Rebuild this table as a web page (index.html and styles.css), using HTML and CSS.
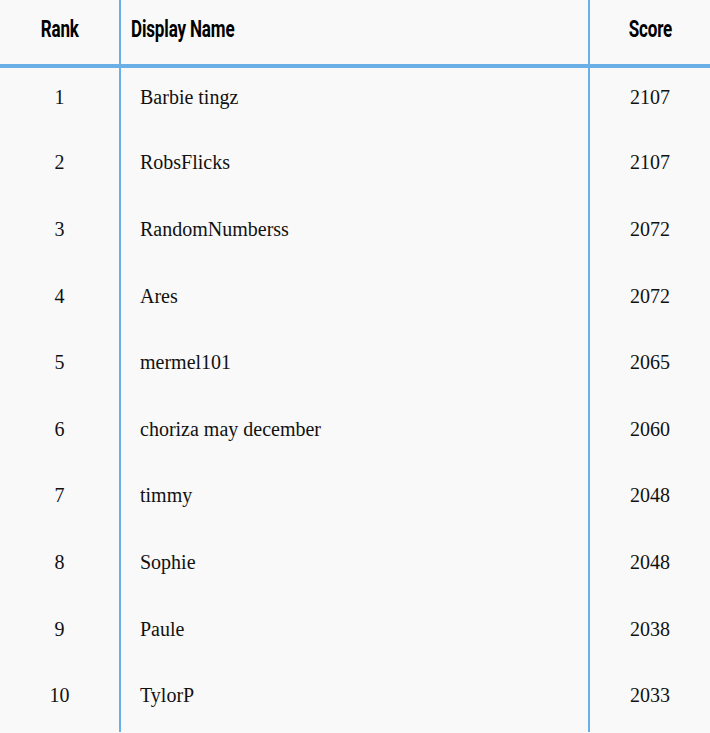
FILE: index.html
```html
<!DOCTYPE html>
<html>
<head>
<meta charset="utf-8">
<link rel="stylesheet" href="styles.css">
</head>
<body>
<table class="board">
  <thead>
    <tr>
      <th class="c-rank"><span class="hd">Rank</span></th>
      <th class="c-name"><span class="hd hd-left">Display Name</span></th>
      <th class="c-score"><span class="hd">Score</span></th>
    </tr>
  </thead>
  <tbody>
    <tr><td class="c-rank">1</td><td class="c-name">Barbie tingz</td><td class="c-score">2107</td></tr>
    <tr><td class="c-rank">2</td><td class="c-name">RobsFlicks</td><td class="c-score">2107</td></tr>
    <tr><td class="c-rank">3</td><td class="c-name">RandomNumberss</td><td class="c-score">2072</td></tr>
    <tr><td class="c-rank">4</td><td class="c-name">Ares</td><td class="c-score">2072</td></tr>
    <tr><td class="c-rank">5</td><td class="c-name">mermel101</td><td class="c-score">2065</td></tr>
    <tr><td class="c-rank">6</td><td class="c-name">choriza may december</td><td class="c-score">2060</td></tr>
    <tr><td class="c-rank">7</td><td class="c-name">timmy</td><td class="c-score">2048</td></tr>
    <tr><td class="c-rank">8</td><td class="c-name">Sophie</td><td class="c-score">2048</td></tr>
    <tr><td class="c-rank">9</td><td class="c-name">Paule</td><td class="c-score">2038</td></tr>
    <tr><td class="c-rank">10</td><td class="c-name">TylorP</td><td class="c-score">2033</td></tr>
  </tbody>
</table>
</body>
</html>
```
FILE: styles.css
```css
html, body {
  margin: 0;
  padding: 0;
  background: #f9f9f9;
}
.board {
  width: 710px;
  border-collapse: collapse;
  table-layout: fixed;
  color: #111;
}
.board th {
  height: 66px;
  padding: 0 0 5px 0;
  font-family: Roboto, "DejaVu Sans Condensed", sans-serif;
  font-weight: bold;
  font-size: 23px;
  color: #000;
  border-bottom: 4px solid #6aafe6;
  vertical-align: middle;
  box-sizing: border-box;
}
.hd {
  display: inline-block;
  transform: scaleX(0.74);
  transform-origin: center;
  letter-spacing: -0.2px;
}
.hd-left {
  transform-origin: left center;
}
.board td {
  height: 66.6px;
  padding: 0 0 6px 0;
  font-family: "Liberation Serif", serif;
  font-size: 20px;
  vertical-align: middle;
  box-sizing: border-box;
}
.c-rank {
  width: 120px;
  text-align: center;
  border-right: 2px solid #6aafe6;
}
.c-name {
  text-align: left;
  border-right: 2px solid #6aafe6;
}
.board th.c-name { padding-left: 10px; }
.board td.c-name { padding-left: 19px; }
.c-score {
  width: 121px;
  text-align: center;
}
```
